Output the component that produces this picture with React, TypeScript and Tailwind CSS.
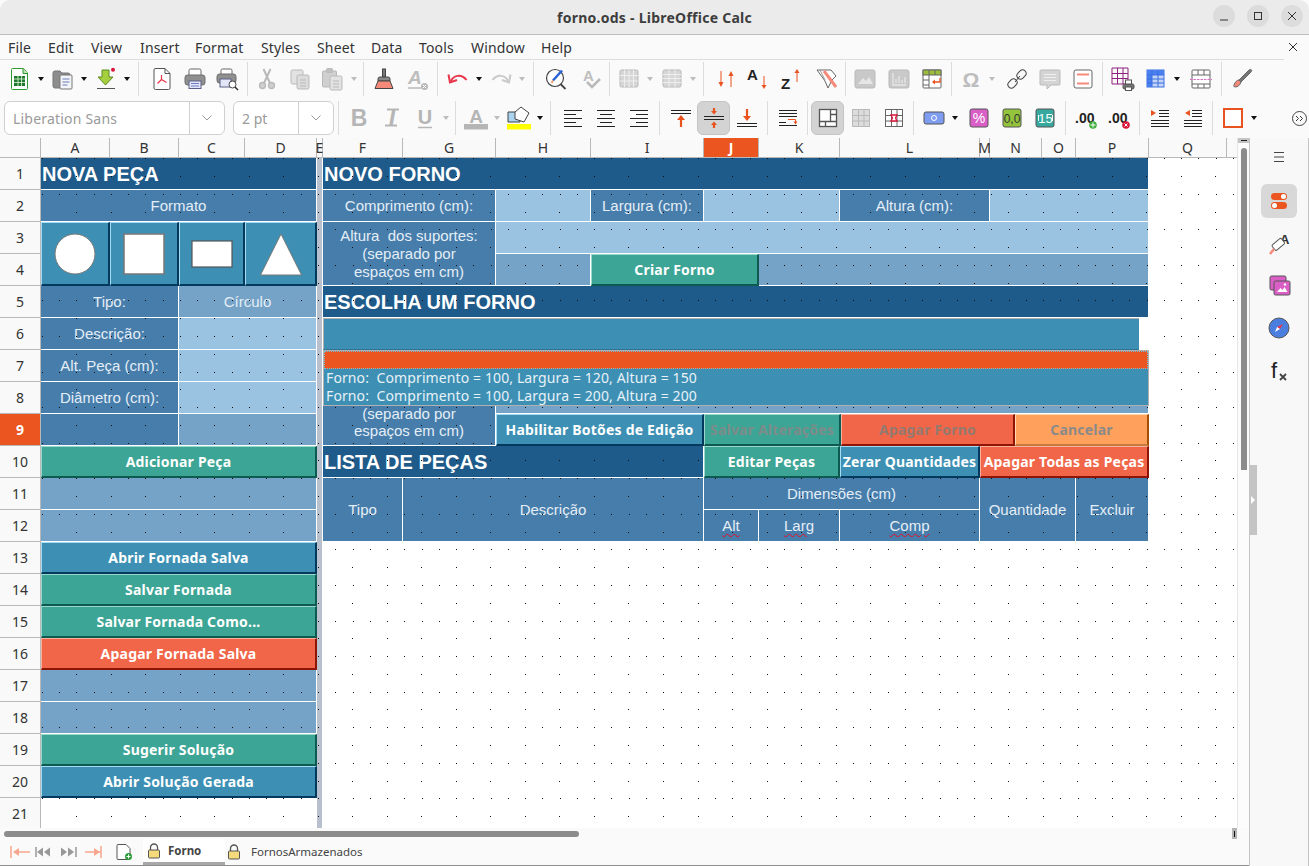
import type { ReactNode } from "react";

const sheetFont = "font-['Liberation_Sans',Arial,sans-serif]";
const uiFont = "font-['Noto_Sans',sans-serif]";

// page grid dots that Calc paints over the cells
function dotsPath() {
  let d = "";
  for (let k = -1; k < 38; k++) {
    const y = Math.round(176 + k * 17.78) - 138;
    if (y < 20) continue;
    const dense = k % 2 !== 0;
    const step = dense ? 17.265 : 34.53;
    for (let x = dense ? 41.735 : 76; x < 1236; x += step) {
      d += `M${Math.round(x)} ${y}h1v1h-1z`;
    }
  }
  return d;
}

function Ico({ children, s = 24 }: { children: ReactNode; s?: number }) {
  return (
    <svg width={s} height={s} viewBox="0 0 24 24" fill="none">
      {children}
    </svg>
  );
}

function T({ children, on }: { children?: ReactNode; on?: boolean }) {
  return (
    <div className={`w-[33px] h-[34px] flex items-center justify-center shrink-0 rounded-[6px] ${on ? "bg-[#d3d3d3] border border-[#c4c4c4]" : ""}`}>
      {children}
    </div>
  );
}

function Drop({ off }: { off?: boolean }) {
  return (
    <div className="w-[10px] h-[34px] flex items-center justify-center shrink-0">
      <div className={`w-0 h-0 border-x-[3.5px] border-x-transparent border-t-[4px] ${off ? "border-t-[#bdbdbd]" : "border-t-[#111]"}`} />
    </div>
  );
}

function Sep({ className }: { className: string }) {
  return (
    <div className={`h-[34px] flex justify-center shrink-0 ${className}`}>
      <div className="w-px h-full bg-[#dcdcdc]" />
    </div>
  );
}

const G = "#b9b9b9";

function GridIco({ dense }: { dense?: boolean }) {
  return (
    <Ico>
      <rect x="3" y="3" width="18" height="17" rx="1.5" fill="#d6d6d6" stroke={G} />
      <path d={dense ? "M3 8.5h18M3 14h18M7.5 3v17M12 3v17M16.5 3v17" : "M3 7.5h18M3 11.5h18M3 15.5h18M9 3v17M15 3v17"} stroke="#efefef" />
    </Ico>
  );
}

function Lines({ kind }: { kind: "l" | "c" | "r" }) {
  const d =
    kind === "l"
      ? "M3 4.500h18M3 8.500h12M3 12.500h18M3 16.500h12M3 20.500h18"
      : kind === "c"
        ? "M3 4.500h18M6 8.500h12M3 12.500h18M6 16.500h12M3 20.500h18"
        : "M3 4.500h18M9 8.500h12M3 12.500h18M9 16.500h12M3 20.500h18";
  return (
    <Ico>
      <path d={d} stroke="#222" />
    </Ico>
  );
}

function Toolbar1() {
  return (
    <div className="h-[38px] flex items-center pl-[3px]">
      <T>
        <Ico>
          <path d="M4.500 1.500h11l4 4.500v15.500a1 1 0 0 1-1 1h-14a1 1 0 0 1-1-1v-19a1 1 0 0 1 1-1z" fill="#fff" stroke="#2f9a2f" />
          <path d="M15 1.500v5h5" fill="#bfe3b0" stroke="#2f9a2f" />
          <rect x="6" y="9" width="11" height="10" fill="#1d7a2c" />
          <path d="M6 12h11M6 15.500h11M10 9v10M13.500 9v10" stroke="#e8f6e0" strokeWidth="0.800" />
        </Ico>
      </T>
      <Drop />
      <T>
        <Ico>
          <path d="M2 6a2 2 0 0 1 2-2h5l2 2h6a2 2 0 0 1 2 2v11a2 2 0 0 1-2 2H4a2 2 0 0 1-2-2z" fill="#8d8d8d" stroke="#777" />
          <rect x="9" y="8" width="12" height="14" rx="1" fill="#f4f5f9" stroke="#777" />
          <path d="M11.500 12h7M11.500 15h7M11.500 18h5" stroke="#6a7db3" />
        </Ico>
      </T>
      <Drop />
      <T>
        <Ico>
          <path d="M8 3h7v7h4l-7.500 8L4 10h4z" fill="#a5cf3f" stroke="#5f8a1e" />
          <path d="M3 21.500h18" stroke="#555" />
          <circle cx="19" cy="2.800" r="2" fill="#d9163a" />
        </Ico>
      </T>
      <Drop />
      <Sep className="w-[13px]" />
      <T>
        <Ico>
          <path d="M5 1.500h10l5 5V21a1.500 1.500 0 0 1-1.500 1.500h-13A1.500 1.500 0 0 1 4 21V3a1.500 1.500 0 0 1 1-1.500z" fill="#fff" stroke="#555" />
          <path d="M15 1.500v5h5" stroke="#555" />
          <path d="M11.500 8v4.500M11.500 12.500l-4 4M11.500 12.500l5 3" stroke="#e8354a" strokeWidth="1.200" />
        </Ico>
      </T>
      <T>
        <Ico>
          <path d="M6 8V3.500A1.500 1.500 0 0 1 7.500 2h9A1.500 1.500 0 0 1 18 3.500V8" stroke="#666" fill="#fff" />
          <rect x="2" y="8" width="20" height="10" rx="2.500" fill="#909090" stroke="#6d6d6d" />
          <rect x="6" y="14" width="12" height="7.500" fill="#e2e6f8" stroke="#5b5f86" />
          <path d="M8 16.500h8M8 19h8" stroke="#6c7bc4" />
        </Ico>
      </T>
      <T>
        <Ico>
          <path d="M5 7V3.500A1.500 1.500 0 0 1 6.500 2h8A1.500 1.500 0 0 1 16 3.500V7" stroke="#666" fill="#fff" />
          <rect x="1" y="7" width="19" height="9" rx="2.500" fill="#909090" stroke="#6d6d6d" />
          <rect x="4" y="12" width="11" height="8" fill="#e2e6f8" stroke="#5b5f86" />
          <circle cx="16.500" cy="17.500" r="3.500" fill="#fff" stroke="#444" />
          <path d="M19 20l3 3" stroke="#333" strokeWidth="1.500" />
        </Ico>
      </T>
      <Sep className="w-[6px]" />
      <T>
        <Ico>
          <circle cx="7.500" cy="18.500" r="3" fill="#cfcfcf" stroke={G} strokeWidth="1.300" />
          <circle cx="16.500" cy="18.500" r="3" fill="#cfcfcf" stroke={G} strokeWidth="1.300" />
          <path d="M9 16L15.500 2M15 16L8.500 2" stroke={G} strokeWidth="2" />
        </Ico>
      </T>
      <T>
        <Ico>
          <rect x="3" y="3" width="12" height="14" rx="1.500" fill="#e2e2e2" stroke={G} />
          <rect x="9" y="8" width="12" height="14" rx="1.500" fill="#dcdcdc" stroke={G} />
          <path d="M12 13h6M12 16h6M12 19h6" stroke={G} />
        </Ico>
      </T>
      <T>
        <Ico>
          <path d="M2.500 4h12a1 1 0 0 1 1 1v14a1 1 0 0 1-1 1h-12a1 1 0 0 1-1-1V5a1 1 0 0 1 1-1z" fill="#d0d0d0" stroke={G} />
          <rect x="5.500" y="1.500" width="6" height="4" rx="1" fill="#c0c0c0" stroke={G} />
          <rect x="9" y="9" width="12" height="14" rx="1.500" fill="#e2e2e2" stroke={G} />
          <path d="M12 14h6M12 17h6M12 20h6" stroke={G} />
        </Ico>
      </T>
      <Drop off />
      <Sep className="w-[8px]" />
      <T>
        <Ico>
          <rect x="10.500" y="2" width="3" height="8" fill="#777" stroke="#444" />
          <path d="M8 10h8a2 2 0 0 1 2 2v2H6v-2a2 2 0 0 1 2-2z" fill="#8a8a8a" stroke="#444" />
          <path d="M6 14h12l3 7.500H3z" fill="#f58a7b" stroke="#444" />
        </Ico>
      </T>
      <T>
        <Ico>
          <text x="3" y="17" fontFamily="Liberation Sans" fontWeight="700" fontStyle="italic" fontSize="19" fill="#bdbdbd">A</text>
          <path d="M3 21h13" stroke={G} strokeWidth="1.500" />
          <circle cx="19.500" cy="19.500" r="3.500" fill={G} />
          <path d="M18 18l3 3M21 18l-3 3" stroke="#fff" />
        </Ico>
      </T>
      <Sep className="w-[8px]" />
      <T>
        <Ico>
          <path d="M5 14.500C7 8 15.500 6.500 20.500 13" stroke="#e8354a" strokeWidth="2" />
          <path d="M2.500 7.500L4 15.500l7-2.500" stroke="#e8354a" strokeWidth="2" />
        </Ico>
      </T>
      <Drop />
      <T>
        <Ico>
          <path d="M19 14.500C17 8 8.500 6.500 3.500 13" stroke="#c9c9c9" strokeWidth="2" />
          <path d="M21.500 7.500L20 15.500l-7-2.500" stroke="#c9c9c9" strokeWidth="2" />
        </Ico>
      </T>
      <Drop off />
      <Sep className="w-[12px]" />
      <T>
        <Ico>
          <circle cx="11" cy="11" r="8.500" fill="#fff" stroke="#444" strokeWidth="1.200" />
          <path d="M16.500 17l5 5" stroke="#444" strokeWidth="1.800" />
          <path d="M9 13.500L18 3.500" stroke="#2a63d6" strokeWidth="2.500" />
          <path d="M7.500 16l1.500-2.500" stroke="#f59b60" strokeWidth="1.800" />
        </Ico>
      </T>
      <div className="w-[2px] shrink-0" />
      <T>
        <Ico>
          <text x="4" y="14" fontFamily="Liberation Sans" fontWeight="700" fontSize="15" fill="#bdbdbd">A</text>
          <path d="M8 15l5 5 8-8" stroke={G} strokeWidth="2.500" />
        </Ico>
      </T>
      <Sep className="w-[5px]" />
      <T><GridIco dense /></T>
      <Drop off />
      <T><GridIco /></T>
      <Drop off />
      <Sep className="w-[11px]" />
      <T>
        <Ico>
          <path d="M7 4v13M17 7v13" stroke="#e8531f" />
          <path d="M4.500 15l2.500 5 2.500-5zM14.500 9l2.500-5 2.500 5z" fill="#e8531f" />
        </Ico>
      </T>
      <T>
        <Ico>
          <text x="0" y="13" fontFamily="Liberation Sans" fontWeight="700" fontSize="15" fill="#222">A</text>
          <path d="M17 9v10" stroke="#e8531f" />
          <path d="M14.500 18l2.500 4 2.500-4z" fill="#e8531f" />
        </Ico>
      </T>
      <T>
        <Ico>
          <text x="1" y="22" fontFamily="Liberation Sans" fontWeight="700" fontSize="15" fill="#222">Z</text>
          <path d="M17 5v10" stroke="#e8531f" />
          <path d="M14.500 6l2.500-4 2.500 4z" fill="#e8531f" />
        </Ico>
      </T>
      <div className="w-[2px] shrink-0" />
      <T>
        <Ico>
          <path d="M2 3h14l5 6-4 4-4 8-3-7z" fill="#fff" stroke="#666" />
          <path d="M9 4l12 16" stroke="#f58a7b" strokeWidth="3" />
          <path d="M5 3l5 10" stroke="#999" />
        </Ico>
      </T>
      <Sep className="w-[5px]" />
      <T>
        <Ico>
          <rect x="2" y="3" width="20" height="18" rx="2" fill="#c9c9c9" stroke={G} />
          <path d="M5 17l5-6 3 3 3-4 4 7z" fill="#e6e6e6" />
        </Ico>
      </T>
      <div className="w-px shrink-0" />
      <T>
        <Ico>
          <rect x="2" y="3" width="20" height="18" rx="2" fill="#c9c9c9" stroke={G} />
          <path d="M6 6v12h13M9 16v-4M12 16V9M15 16v-3M18 16v-6" stroke="#e6e6e6" strokeWidth="1.300" />
        </Ico>
      </T>
      <T>
        <Ico>
          <rect x="3" y="3" width="18" height="18" rx="1" fill="#fff" stroke="#666" />
          <rect x="3" y="3" width="18" height="5" fill="#9cbe3a" stroke="#666" />
          <path d="M9 3v5M15 3v5M3 13h6M3 18h6M9 8v13" stroke="#666" />
          <path d="M20 11v4h-7" stroke="#e8531f" strokeWidth="1.300" />
          <path d="M15 12.500l-3 2.500 3 2.500z" fill="#e8531f" />
        </Ico>
      </T>
      <Sep className="w-[6px]" />
      <T>
        <Ico>
          <text x="12" y="20" textAnchor="middle" fontFamily="Liberation Sans" fontWeight="700" fontSize="21" fill="#bdbdbd">Ω</text>
        </Ico>
      </T>
      <Drop off />
      <div className="w-[3px] shrink-0" />
      <T>
        <Ico>
          <path d="M10 15l5-6" stroke="#444" />
          <rect x="-5" y="-3.500" width="10" height="7" rx="3.500" transform="translate(7.500 16.500) rotate(-45)" stroke="#444" />
          <rect x="-5" y="-3.500" width="10" height="7" rx="3.500" transform="translate(16.500 7.500) rotate(-45)" stroke="#444" />
        </Ico>
      </T>
      <T>
        <Ico>
          <path d="M3 3h18a1 1 0 0 1 1 1v13a1 1 0 0 1-1 1H13l-4 4v-4H3a1 1 0 0 1-1-1V4a1 1 0 0 1 1-1z" fill="#d4d4d4" stroke={G} />
          <path d="M6 7.500h12M6 10.500h12M6 13.500h12" stroke="#efefef" />
        </Ico>
      </T>
      <T>
        <Ico>
          <rect x="3" y="3" width="18" height="18" rx="2" fill="#fff" stroke="#666" />
          <path d="M6 7.500h12M6 16.500h12" stroke="#f58a7b" strokeWidth="2" />
        </Ico>
      </T>
      <Sep className="w-[7px]" />
      <T>
        <Ico>
          <path d="M1 1h16v16H1zM1 6.500h16M1 11.500h16M6.500 1v16M12 1v16" stroke="#8f1f7f" />
          <rect x="12" y="17" width="11" height="5" rx="1.500" fill="#777" stroke="#555" />
          <rect x="14.500" y="13" width="6" height="4" fill="#fff" stroke="#555" />
          <rect x="14.500" y="20" width="6" height="3.500" fill="#fff" stroke="#555" />
        </Ico>
      </T>
      <T>
        <Ico>
          <rect x="3" y="3" width="17" height="17" fill="#c3d4f7" stroke="#3a6fe0" />
          <rect x="3" y="3" width="17" height="5" fill="#4a7ff0" />
          <rect x="3" y="3" width="5" height="17" fill="#4a7ff0" />
          <path d="M3 8h17M3 12h17M3 16h17M8 3v17M14 3v17" stroke="#3a6fe0" />
        </Ico>
      </T>
      <Drop />
      <div className="w-[2px] shrink-0" />
      <T>
        <Ico>
          <rect x="3" y="3" width="18" height="18" rx="1" fill="#fff" stroke="#666" />
          <path d="M3 8h18M3 17h18M9 3v5M15 3v5M9 17v4M15 17v4" stroke="#666" />
          <path d="M1 12.500h22" stroke="#d96cc6" strokeDasharray="2.500 1" />
        </Ico>
      </T>
      <Sep className="w-[8px]" />
      <T>
        <Ico>
          <path d="M9 13L19 3c2-1.500 3.500 0 2 2L11 15z" fill="#777" stroke="#666" />
          <path d="M9 13l2 2c-1 3-3 5-6 5-1 0-1.500-1-1-2 1-3 3-5 5-5z" fill="#f58a7b" stroke="#666" />
        </Ico>
      </T>
    </div>
  );
}

function Toolbar2() {
  return (
    <div className="h-[40px] flex items-center pl-[4px]">
      <div className="w-[221px] h-[34px] rounded-[6px] border border-[#d0d0d0] bg-white flex shrink-0 text-[14px] text-[#9a9a9a]">
        <div className={`flex-1 pl-[8px] flex items-center tracking-[0.2px] ${uiFont}`}>Liberation Sans</div>
        <div className="w-[35px] border-l border-[#d0d0d0] flex items-center justify-center">
          <svg width="12" height="8" viewBox="0 0 12 8" fill="none"><path d="M1.500 1.500L6 6l4.500-4.500" stroke="#999" /></svg>
        </div>
      </div>
      <div className="w-[101px] h-[34px] ml-[8px] rounded-[6px] border border-[#d0d0d0] bg-white flex shrink-0 text-[14px] text-[#9a9a9a]">
        <div className={`flex-1 pl-[8px] flex items-center ${uiFont}`}>2 pt</div>
        <div className="w-[35px] border-l border-[#d0d0d0] flex items-center justify-center">
          <svg width="12" height="8" viewBox="0 0 12 8" fill="none"><path d="M1.500 1.500L6 6l4.500-4.500" stroke="#999" /></svg>
        </div>
      </div>
      <Sep className="w-[8px]" />
      <T>
        <Ico>
          <text x="12" y="20" textAnchor="middle" fontFamily="Liberation Sans" fontWeight="700" fontSize="23" fill="#b5b5b5">B</text>
        </Ico>
      </T>
      <T>
        <Ico>
          <text x="12" y="20" textAnchor="middle" fontFamily="Liberation Sans" fontWeight="700" fontStyle="italic" fontSize="23" fill="#b5b5b5">I</text>
          <path d="M7 3.500h12M5 19.500h12" stroke="#b5b5b5" strokeWidth="2" />
        </Ico>
      </T>
      <T>
        <Ico>
          <text x="12" y="18" textAnchor="middle" fontFamily="Liberation Sans" fontWeight="700" fontSize="20" fill="#b5b5b5">U</text>
          <path d="M5 21.500h14" stroke="#b5b5b5" strokeWidth="1.500" />
        </Ico>
      </T>
      <Drop off />
      <Sep className="w-[8px]" />
      <T>
        <Ico>
          <text x="12" y="16.500" textAnchor="middle" fontFamily="Liberation Sans" fontWeight="700" fontSize="19" fill="#b5b5b5">A</text>
          <rect x="0" y="18" width="24" height="5.500" fill="#b5b5b5" />
        </Ico>
      </T>
      <Drop off />
      <T>
        <Ico>
          <path d="M1 6h9l3 3v7H1z" fill="#a9d3ee" stroke="#444" />
          <path d="M8 6l6-5 8 6-5 9-9-3z" fill="#fff" stroke="#444" />
          <rect x="0" y="18" width="24" height="5.500" fill="#ffff00" />
        </Ico>
      </T>
      <Drop />
      <Sep className="w-[11px]" />
      <T><Lines kind="l" /></T>
      <T><Lines kind="c" /></T>
      <T><Lines kind="r" /></T>
      <Sep className="w-[9px]" />
      <T>
        <Ico>
          <path d="M2 4.500h20M2 7.500h20" stroke="#222" />
          <path d="M12 21v-8" stroke="#e8531f" strokeWidth="2.200" />
          <path d="M8 14l4-5 4 5z" fill="#e8531f" />
        </Ico>
      </T>
      <T on>
        <Ico>
          <path d="M2 10.500h20M2 13.500h20" stroke="#222" />
          <path d="M12 2v3M12 19v3" stroke="#e8531f" strokeWidth="2.200" />
          <path d="M9 5l3 3.500L15 5zM9 19l3-3.500 3 3.500z" fill="#e8531f" />
        </Ico>
      </T>
      <T>
        <Ico>
          <path d="M2 17.500h20M2 20.500h20" stroke="#222" />
          <path d="M12 3v8" stroke="#e8531f" strokeWidth="2.200" />
          <path d="M8 10l4 5 4-5z" fill="#e8531f" />
        </Ico>
      </T>
      <Sep className="w-[8px]" />
      <T>
        <Ico>
          <path d="M3 4.500h18M3 7.500h18M3 10.500h18M3 19.500h18M3 16.500h7" stroke="#222" />
          <path d="M12 13.500h7.500v3" stroke="#e8531f" />
          <path d="M17.500 15.500l2 3 2-3z" fill="#e8531f" />
        </Ico>
      </T>
      <Sep className="w-[7px]" />
      <T on>
        <Ico>
          <rect x="3.500" y="3.500" width="17" height="17" fill="#fff" stroke="#555" strokeWidth="1.300" />
          <path d="M3.500 15.500h17M14.500 3.500v12M9.500 15.500v5M14.500 8.500h6" stroke="#555" strokeWidth="1.300" />
        </Ico>
      </T>
      <T>
        <Ico>
          <rect x="3.500" y="3.500" width="17" height="17" fill="#dcdcdc" stroke={G} />
          <path d="M3.500 9.500h17M3.500 15h17M9.500 3.500v17M15 3.500v17" stroke={G} />
        </Ico>
      </T>
      <T>
        <Ico>
          <rect x="3.500" y="3.500" width="17" height="17" fill="#fff" stroke="#666" />
          <path d="M3.500 9.500h17M3.500 15h17M9.500 3.500v17M15 3.500v17" stroke="#666" />
          <path d="M9 9h6l-1.500 3 1.500 3H9l1.500-3z" fill="#fff" stroke="#d9163a" strokeWidth="1.300" />
        </Ico>
      </T>
      <Sep className="w-[7px]" />
      <T>
        <Ico>
          <rect x="2" y="6" width="20" height="12" rx="2" fill="#7e9cf0" stroke="#555" />
          <circle cx="12" cy="12" r="2.500" stroke="#fff" />
        </Ico>
      </T>
      <Drop />
      <div className="w-[2px] shrink-0" />
      <T>
        <Ico>
          <rect x="3" y="3" width="18" height="18" rx="2" fill="#d95fc7" stroke="#555" />
          <text x="12" y="17" textAnchor="middle" fontFamily="Liberation Sans" fontSize="14" fill="#fff">%</text>
        </Ico>
      </T>
      <T>
        <Ico>
          <rect x="3" y="3" width="18" height="18" rx="2" fill="#93c43c" stroke="#555" />
          <text x="12" y="17" textAnchor="middle" fontFamily="Liberation Sans" fontSize="12" fill="#333">0,0</text>
        </Ico>
      </T>
      <T>
        <Ico>
          <rect x="3" y="3" width="18" height="18" rx="2" fill="#36a89e" stroke="#555" />
          <text x="12.500" y="17" textAnchor="middle" fontFamily="Liberation Sans" fontSize="13" fill="#fff">15</text>
          <path d="M5.500 9v6M19.500 9v6" stroke="#fff" />
        </Ico>
      </T>
      <Sep className="w-[8px]" />
      <T>
        <Ico>
          <text x="1" y="17" fontFamily="Liberation Sans" fontWeight="700" fontSize="14" fill="#222">.00</text>
          <circle cx="19" cy="19" r="3.800" fill="#3fae3f" />
          <path d="M19 16.500v5M16.500 19h5" stroke="#fff" />
        </Ico>
      </T>
      <T>
        <Ico>
          <text x="1" y="17" fontFamily="Liberation Sans" fontWeight="700" fontSize="14" fill="#222">.00</text>
          <circle cx="19" cy="19" r="3.800" fill="#d9163a" />
          <path d="M17.500 17.500l3 3M20.500 17.500l-3 3" stroke="#fff" />
        </Ico>
      </T>
      <Sep className="w-[8px]" />
      <T>
        <Ico>
          <path d="M11 4.500h10M11 7.500h10M11 10.500h10M3 14.500h18M3 17.500h18M3 20.500h18" stroke="#222" />
          <path d="M3 4v6l5-3z" fill="#e8531f" />
        </Ico>
      </T>
      <T>
        <Ico>
          <path d="M11 4.500h10M11 7.500h10M11 10.500h10M3 14.500h18M3 17.500h18M3 20.500h18" stroke="#222" />
          <path d="M9 4v6L4 7z" fill="#e8531f" />
        </Ico>
      </T>
      <Sep className="w-[7px]" />
      <T>
        <div className="w-[20px] h-[20px] bg-white border-2 border-[#e8531f]" />
      </T>
      <Drop />
      <div className="ml-auto mr-[2px] w-[15px] h-[15px] rounded-full border border-[#444] flex items-center justify-center">
        <svg width="9" height="7" viewBox="0 0 9 7" fill="none"><path d="M1 1l2.500 2.500L1 6M5 1l2.500 2.500L5 6" stroke="#333" /></svg>
      </div>
    </div>
  );
}

const colNames = ["A", "B", "C", "D", "E", "F", "G", "H", "I", "J", "K", "L", "M", "N", "O", "P", "Q"];

const dark = "bg-[#1f5b8a] text-white font-bold text-[20px] pl-[1px] flex items-center border-r border-b border-white";
const mid = "bg-[#477dab] flex items-center justify-center text-center pt-[2px] border-r border-b border-white";
const soft = "bg-[#75a2c7] flex items-center justify-center text-center pt-[2px] border-r border-b border-white";
const light = "bg-[#9ac2e1] border-r border-b border-white";

const btnBase = `z-20 flex items-center justify-center whitespace-nowrap text-[14px] font-bold tracking-[0.2px] border-t border-l border-b-2 border-r-2 ${uiFont}`;
const faceGreen = `${btnBase} bg-[#3da595] border-t-[#9ad8cd] border-l-[#9ad8cd] border-b-[#0d5a50] border-r-[#0d5a50]`;
const faceRed = `${btnBase} bg-[#f16648] border-t-[#f9b09f] border-l-[#f9b09f] border-b-[#8e1405] border-r-[#8e1405]`;
const btnGreen = `${faceGreen} text-white`;
const btnRed = `${faceRed} text-white`;
const btnBlue = `${btnBase} text-white bg-[#3d90b4] border-t-[#a5dcf3] border-l-[#a5dcf3] border-b-[#03395c] border-r-[#03395c]`;
const btnOrange = `${btnBase} bg-[#ffa05c] text-[#8a8a8a] border-t-[#ffd6b0] border-l-[#ffd6b0] border-b-[#c77a3d] border-r-[#a34e00]`;
const shapeBtn = "z-20 bg-[#3d90b4] flex items-center justify-center border-t border-t-[#a5dcf3] border-l border-l-[#a5dcf3] border-b-2 border-b-[#03395c] border-r-2 border-r-[#03395c]";
const wavy = "underline decoration-wavy decoration-[#e0102a] decoration-1 underline-offset-2";

function Sheet() {
  return (
    <div className={`relative w-[1237px] h-[690px] overflow-hidden bg-white text-[15px] text-[#e4eef6] ${sheetFont} grid grid-cols-[41px_69px_69px_66px_72px_6px_80px_93px_95px_113px_55px_81px_140px_10px_52px_34px_73px_78px_1fr] grid-rows-[20px_repeat(21,32px)]`}>
      <div className="row-[1] bg-[#f9f9f9] border-r border-b border-[#b8b8b8]" />
      {colNames.map((name) => (
        <div key={name} className={`row-[1] flex items-center justify-center overflow-visible border-r border-b border-[#b8b8b8] text-[14px] ${name === "J" ? "bg-[#ea5520] text-white font-bold" : "bg-[#f9f9f9] text-[#333]"} ${uiFont}`}>
          {name}
        </div>
      ))}
      <div className="row-[1] bg-[#f9f9f9] border-b border-[#b8b8b8]" />
      {Array.from({ length: 21 }, (_, i) => (
        <div key={i} className={`col-[1] flex items-center justify-center border-r border-b border-[#b8b8b8] text-[14px] ${i === 8 ? "bg-[#ea5520] text-white font-bold" : "bg-[#f9f9f9] text-[#333]"} ${uiFont}`}>
          {i + 1}
        </div>
      ))}
      <div className="col-[6] row-[2/23] bg-[#b7c0cc] border-r border-white" />

      <div className={`col-[2/6] row-[2] ${dark}`}>NOVA PEÇA</div>
      <div className={`col-[7/18] row-[2] ${dark}`}>NOVO FORNO</div>

      <div className={`col-[2/6] row-[3] ${mid}`}>Formato</div>
      <div className={`col-[7/9] row-[3] ${mid}`}>Comprimento (cm):</div>
      <div className={`col-[9] row-[3] ${light}`} />
      <div className={`col-[10] row-[3] ${mid}`}>Largura (cm):</div>
      <div className={`col-[11/13] row-[3] ${light}`} />
      <div className={`col-[13/15] row-[3] ${mid}`}>Altura (cm):</div>
      <div className={`col-[15/18] row-[3] ${light}`} />

      <button className={`col-[2] row-[4/6] ${shapeBtn}`}>
        <svg width="44" height="44" viewBox="0 0 44 44"><circle cx="22" cy="22" r="20" fill="#fff" stroke="#777" /></svg>
      </button>
      <button className={`col-[3] row-[4/6] ${shapeBtn}`}>
        <svg width="42" height="42" viewBox="0 0 42 42"><rect x="1" y="1" width="40" height="40" fill="#fff" stroke="#777" strokeWidth="1.500" /></svg>
      </button>
      <button className={`col-[4] row-[4/6] ${shapeBtn}`}>
        <svg width="42" height="28" viewBox="0 0 42 28"><rect x="1" y="1" width="40" height="26" fill="#fff" stroke="#555" strokeWidth="1.200" /></svg>
      </button>
      <button className={`col-[5] row-[4/6] ${shapeBtn}`}>
        <svg width="44" height="44" viewBox="0 0 44 44"><path d="M22 2l20.500 41H1.500z" fill="#fff" stroke="#777" /></svg>
      </button>

      <div className={`col-[7/9] row-[4/6] leading-[18px] ${mid}`}>
        <span className="block -mt-[2px]">
          Altura&nbsp; dos suportes:
          <br />
          (separado por
          <br />
          espaços em cm)
        </span>
      </div>
      <div className={`col-[9/18] row-[4] ${light}`} />
      <div className={`col-[9] row-[5] ${soft}`} />
      <button className={`col-[10/12] row-[5] ${btnGreen}`}>Criar Forno</button>
      <div className={`col-[12/18] row-[5] ${soft}`} />

      <div className={`col-[2/4] row-[6] ${mid}`}>Tipo:</div>
      <div className={`col-[4/6] row-[6] ${soft}`}>Círculo</div>
      <div className={`col-[7/18] row-[6] ${dark}`}>ESCOLHA UM FORNO</div>

      <div className={`col-[2/4] row-[7] ${mid}`}>Descrição:</div>
      <div className={`col-[4/6] row-[7] ${light}`} />
      <div className="col-[7/18] row-[7] z-20 bg-white">
        <div className="h-full w-[816px] bg-[#3d90b4] border-t border-l border-[#b0b0b0] border-b border-b-[#2d7396]" />
      </div>

      <div className={`col-[2/4] row-[8] ${mid}`}>Alt. Peça (cm):</div>
      <div className={`col-[4/6] row-[8] ${light}`} />
      <div className={`col-[2/4] row-[9] ${mid}`}>Diâmetro (cm):</div>
      <div className={`col-[4/6] row-[9] ${light}`} />
      <div className={`col-[2/4] row-[10] ${mid}`} />
      <div className={`col-[4/6] row-[10] ${soft}`} />

      <div className="col-[7/9] row-[8/11] bg-[#477dab] flex items-end justify-center text-center pb-[6px] leading-[17px] border-r border-b border-white">
        <span>
          (separado por
          <br />
          espaços em cm)
        </span>
      </div>
      <div className={`col-[9/18] row-[8/10] ${soft}`} />
      <button className={`col-[9/11] row-[10] ${btnBlue}`}>Habilitar Botões de Edição</button>
      <div className="col-[11/18] row-[10] flex">
        <button className={`w-[137px] ${faceGreen} text-[#7d8c8a]`}>Salvar Alterações</button>
        <button className={`w-[174px] ${faceRed} text-[#94796f]`}>Apagar Forno</button>
        <button className={`flex-1 ${btnOrange}`}>Cancelar</button>
      </div>

      <button className={`col-[2/6] row-[11] ${btnGreen}`}>Adicionar Peça</button>
      <div className={`col-[7/11] row-[11] ${dark}`}>LISTA DE PEÇAS</div>
      <button className={`col-[11/13] row-[11] ${btnGreen}`}>Editar Peças</button>
      <button className={`col-[13] row-[11] ${btnBlue}`}>Zerar Quantidades</button>
      <button className={`col-[14/18] row-[11] ${btnRed}`}>Apagar Todas as Peças</button>

      <div className={`col-[2/6] row-[12] ${soft}`} />
      <div className={`col-[2/6] row-[13] ${soft}`} />
      <div className={`col-[7] row-[12/14] ${mid}`}>Tipo</div>
      <div className={`col-[8/11] row-[12/14] ${mid}`}>Descrição</div>
      <div className={`col-[11/14] row-[12] ${mid}`}>Dimensões (cm)</div>
      <div className={`col-[11] row-[13] ${mid}`}><span className={wavy}>Alt</span></div>
      <div className={`col-[12] row-[13] ${mid}`}><span className={wavy}>Larg</span></div>
      <div className={`col-[13] row-[13] ${mid}`}><span className={wavy}>Comp</span></div>
      <div className={`col-[14/17] row-[12/14] ${mid}`}>Quantidade</div>
      <div className={`col-[17] row-[12/14] ${mid}`}>Excluir</div>

      <button className={`col-[2/6] row-[14] ${btnBlue}`}>Abrir Fornada Salva</button>
      <button className={`col-[2/6] row-[15] ${btnGreen}`}>Salvar Fornada</button>
      <button className={`col-[2/6] row-[16] ${btnGreen}`}>Salvar Fornada Como...</button>
      <button className={`col-[2/6] row-[17] ${btnRed}`}>Apagar Fornada Salva</button>
      <div className={`col-[2/6] row-[18] ${soft}`} />
      <div className={`col-[2/6] row-[19] ${soft}`} />
      <button className={`col-[2/6] row-[20] ${btnGreen}`}>Sugerir Solução</button>
      <button className={`col-[2/6] row-[21] ${btnBlue}`}>Abrir Solução Gerada</button>

      <svg className="absolute left-0 top-0 z-10 pointer-events-none" width="1237" height="690">
        <path d={dotsPath()} fill="#111" shapeRendering="crispEdges" />
      </svg>

      {/* open listbox of the combo in row 6 */}
      <div className={`absolute left-[323px] top-[212px] w-[826px] h-[56px] z-30 bg-[#3d90b4] border border-[#b0b0b0] text-[14px] leading-[18px] tracking-[0.11px] text-[#e8f1f7] ${uiFont}`}>
        <div className="h-[18px] bg-[#ea5520] border border-dotted border-[#6fc4e0]" />
        <div className="pl-[2px] whitespace-pre">Forno:  Comprimento = 100, Largura = 120, Altura = 150</div>
        <div className="pl-[2px] whitespace-pre">Forno:  Comprimento = 100, Largura = 200, Altura = 200</div>
      </div>
    </div>
  );
}

function Sidebar() {
  return (
    <div className="w-[60px] h-[728px] shrink-0 bg-[#f8f8f8] flex flex-col items-center pt-[13px] border-l border-r border-[#c4c4c4] relative">
      <svg width="14" height="12" viewBox="0 0 14 12"><path d="M2 1.500h10M2 6h10M2 10.500h10" stroke="#444" /></svg>
      <div className="w-[36px] h-[34px] mt-[21px] bg-[#d8d8d8] rounded-[6px] flex items-center justify-center">
        <svg width="24" height="24" viewBox="0 0 24 24">
          <rect x="4" y="4" width="16" height="7" rx="3.500" fill="#ea5520" />
          <rect x="4" y="13" width="16" height="7" rx="3.500" fill="#ea5520" />
          <circle cx="16.500" cy="7.500" r="2.500" fill="#fff" />
          <circle cx="7.500" cy="16.500" r="2.500" fill="#fff" />
        </svg>
      </div>
      <div className="mt-[15px] h-[24px]">
        <Ico>
          <text x="13" y="11" fontFamily="Liberation Sans" fontWeight="700" fontSize="13" fill="#333">A</text>
          <rect x="5" y="8" width="12" height="7" rx="1.500" transform="rotate(-40 11 11)" fill="#fff" stroke="#555" />
          <path d="M7 16l-4 5" stroke="#f58a7b" strokeWidth="2.500" />
        </Ico>
      </div>
      <div className="mt-[16px] h-[24px]">
        <Ico>
          <rect x="3" y="3" width="16" height="14" rx="1.500" fill="#d95fc7" stroke="#555" />
          <rect x="7" y="8" width="16" height="14" rx="1.500" fill="#d95fc7" stroke="#555" />
          <path d="M10 19l3.500-4 2 2 2-3 3 5z" fill="#fff" />
          <circle cx="18" cy="11.500" r="1.200" fill="#fff" />
        </Ico>
      </div>
      <div className="mt-[19px] h-[24px]">
        <Ico>
          <circle cx="12" cy="12" r="10" fill="#4a7fe0" stroke="#555" />
          <path d="M16 8l-6 3 3 2z" fill="#e8354a" />
          <path d="M8 16l2-5 3 2z" fill="#fff" />
        </Ico>
      </div>
      <div className="mt-[19px] h-[24px]">
        <Ico>
          <text x="4" y="19" fontFamily="Liberation Sans" fontSize="22" fill="#222">f</text>
          <path d="M13 15l6 6M19 15l-6 6" stroke="#444" strokeWidth="1.800" />
        </Ico>
      </div>
      <div className="absolute left-[-1px] top-[327px] w-[8px] h-[70px] bg-[#c4c4c4] flex items-center justify-center">
        <div className="w-0 h-0 border-y-[4px] border-y-transparent border-l-[4px] border-l-white" />
      </div>
    </div>
  );
}

function Lock() {
  return (
    <svg width="14" height="16" viewBox="0 0 14 16" fill="none">
      <path d="M3.500 7V4.500a3.500 3.500 0 0 1 7 0V7" stroke="#555" strokeWidth="1.300" />
      <rect x="1.500" y="7" width="11" height="8" rx="1" fill="#f5d97a" stroke="#555" />
    </svg>
  );
}

function TabBar() {
  return (
    <div className={`h-[26px] flex items-center text-[11.5px] text-[#444] ${uiFont}`}>
      <div className="w-[9px]" />
      <svg width="100" height="14" viewBox="0 0 100 14" fill="none">
        <path d="M2 1v12M5 7h16" stroke="#f7a78f" strokeWidth="1.500" />
        <path d="M4 7l6-4v8z" fill="#f7a78f" />
        <path d="M27 2v10" stroke="#999" strokeWidth="1.500" />
        <path d="M28 7l6-4.500v9zM35 7l6-4.500v9z" fill="#999" />
        <path d="M67 2v10" stroke="#999" strokeWidth="1.500" />
        <path d="M52 2.500l6 4.500-6 4.500zM59 2.500l6 4.500-6 4.500z" fill="#999" />
        <path d="M92 1v12M76 7h16" stroke="#f7a78f" strokeWidth="1.500" />
        <path d="M91 7l-6-4v8z" fill="#f7a78f" />
      </svg>
      <div className="w-[7px]" />
      <svg width="16" height="18" viewBox="0 0 16 18" fill="none">
        <path d="M2 1.500h8l4 4v10a1 1 0 0 1-1 1H2a1 1 0 0 1-1-1v-13a1 1 0 0 1 1-1z" fill="#fff" stroke="#555" />
        <circle cx="12.500" cy="13.500" r="3.500" fill="#2e9e3a" />
        <path d="M12.500 11.500v4M10.500 13.500h4" stroke="#fff" />
      </svg>
      <div className="ml-[11px] w-[82px] h-[26px] bg-white border-b-[3px] border-[#a8a8a8] flex items-center pl-[4px] gap-[7px] font-bold">
        <Lock />
        Forno
      </div>
      <div className="flex items-center pl-[2px] gap-[10px]">
        <Lock />
        FornosArmazenados
      </div>
    </div>
  );
}

export default function App() {
  return (
    <div className={`w-[1309px] h-[866px] overflow-hidden bg-[#fafafa] ${uiFont}`}>
      <div className="h-[35px] bg-[#ebebeb] border-b border-[#bdbdbd] rounded-t-[10px] flex items-center justify-center relative">
        <span className="text-[14px] font-bold tracking-[0.25px] text-[#3d3d3d]">forno.ods - LibreOffice Calc</span>
        <div className="absolute right-[6px] top-[5px] flex gap-[12px]">
          {["min", "max", "close"].map((k) => (
            <div key={k} className="w-[22px] h-[22px] rounded-full bg-[#dcdcdc] flex items-center justify-center">
              <svg width="12" height="12" viewBox="0 0 12 12" fill="none">
                {k === "min" && <path d="M2 10h8" stroke="#333" />}
                {k === "max" && <rect x="2.500" y="2.500" width="7" height="7" stroke="#333" />}
                {k === "close" && <path d="M2 2l8 8M10 2l-8 8" stroke="#333" />}
              </svg>
            </div>
          ))}
        </div>
      </div>
      <div className="h-[25px] flex items-center pl-[8px] mr-[25px] border-b border-[#dcdcdc] text-[14px] tracking-[0.15px] text-[#333] relative">
        <span className="w-[40px]">File</span>
        <span className="w-[43px]">Edit</span>
        <span className="w-[49px]">View</span>
        <span className="w-[55px]">Insert</span>
        <span className="w-[66px]">Format</span>
        <span className="w-[56px]">Styles</span>
        <span className="w-[54px]">Sheet</span>
        <span className="w-[48px]">Data</span>
        <span className="w-[52px]">Tools</span>
        <span className="w-[70px]">Window</span>
        <span>Help</span>
        <svg className="absolute right-[-14px] top-[7px]" width="10" height="10" viewBox="0 0 10 10" fill="none"><path d="M1 1l8 8M9 1l-8 8" stroke="#333" /></svg>
      </div>
      <Toolbar1 />
      <Toolbar2 />
      <div className="flex">
        <div className="w-[1249px] shrink-0">
          <div className="flex">
            <Sheet />
            <div className="w-[12px] h-[690px] shrink-0 bg-[#fcfcfc] border-l border-[#e6e6e6] flex flex-col items-center">
              <div className="w-[12px] h-[5px] bg-[#c4c4c4] flex items-center justify-center"><div className="w-[6px] h-px bg-[#222]" /></div>
              <div className="w-[6px] h-[322px] mt-[5px] rounded-t-[3px] bg-[#8c8c8c]" />
            </div>
          </div>
          <div className="h-[11px] pl-[4px] pr-[12px] flex items-center">
            <div className="w-[575px] h-[6px] rounded-[3px] bg-[#8c8c8c]" />
            <div className="ml-auto w-[5px] h-[11px] bg-[#b4b4b4] flex items-center justify-center"><div className="w-px h-[6px] bg-[#111]" /></div>
          </div>
          <TabBar />
          <div className="h-px bg-[#8e8e8e]" />
        </div>
        <Sidebar />
      </div>
    </div>
  );
}
